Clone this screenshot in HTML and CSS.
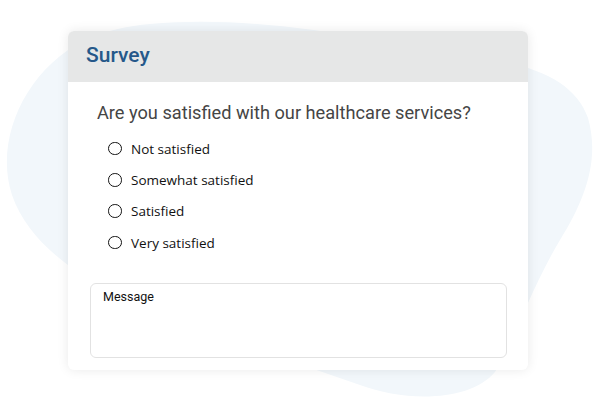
FILE: index.html
```html
<!DOCTYPE html>
<html>
<head>
<meta charset="utf-8">
<link rel="stylesheet" href="styles.css">
</head>
<body>
<div class="page">
  <svg class="blob" width="600" height="400" viewBox="0 0 600 400">
    <path d="M150 24 C 260 14, 380 40, 470 58 C 530 62, 575 80, 588 118 C 600 160, 585 200, 560 240 C 530 290, 515 340, 495 372 C 470 402, 405 402, 360 385 L 200 330 C 120 300, 35 262, 12 195 C -6 140, 25 70, 85 40 C 108 30, 128 26, 150 24 Z" fill="#f2f7fb"/>
  </svg>
  <div class="card">
    <div class="card-head">Survey</div>
    <div class="card-body">
      <div class="question">Are you satisfied with our healthcare services?</div>
      <ul class="options">
        <li class="option"><span class="radio"></span><span class="label">Not satisfied</span></li>
        <li class="option"><span class="radio"></span><span class="label">Somewhat satisfied</span></li>
        <li class="option"><span class="radio"></span><span class="label">Satisfied</span></li>
        <li class="option"><span class="radio"></span><span class="label">Very satisfied</span></li>
      </ul>
      <div class="message">Message</div>
    </div>
  </div>
</div>
</body>
</html>
```
FILE: styles.css
```css
html, body {
  margin: 0;
  padding: 0;
  background: #ffffff;
}
.page {
  position: relative;
  width: 600px;
  height: 400px;
  overflow: hidden;
  padding-top: 31px;
  box-sizing: border-box;
}
.blob {
  position: absolute;
  left: 0;
  top: 0;
}
.card {
  position: relative;
  margin-left: 68px;
  width: 460px;
  height: 339px;
  background: #ffffff;
  border-radius: 6px;
  box-shadow: 0 0 12px rgba(0, 0, 0, 0.09);
  overflow: hidden;
}
.card-head {
  height: 51px;
  background: #e6e7e7;
  box-sizing: border-box;
  padding-left: 18px;
  display: flex;
  align-items: center;
  padding-bottom: 3px;
  font-family: Roboto, "Liberation Sans", sans-serif;
  font-weight: 500;
  font-size: 21px;
  color: #25588a;
}
.card-body {
  padding: 19px 21px 0 22px;
}
.question {
  margin-left: 7px;
  font-family: Roboto, "Liberation Sans", sans-serif;
  font-size: 18.2px;
  line-height: 24px;
  color: #454545;
}
.options {
  list-style: none;
  margin: 8px 0 0 18px;
  padding: 0;
}
.option {
  display: flex;
  align-items: center;
  height: 31.3px;
}
.radio {
  width: 11.5px;
  height: 11.5px;
  border: 1.3px solid #111;
  border-radius: 50%;
  margin-right: 9.5px;
}
.label {
  font-family: "Open Sans", "Noto Sans", sans-serif;
  font-size: 13.5px;
  color: #111;
}
.message {
  margin-top: 25px;
  height: 75px;
  box-sizing: border-box;
  border: 1px solid #e2e2e2;
  border-radius: 6px;
  padding: 5px 12px;
  font-family: Roboto, "Liberation Sans", sans-serif;
  font-size: 12.5px;
  color: #111;
}
```
